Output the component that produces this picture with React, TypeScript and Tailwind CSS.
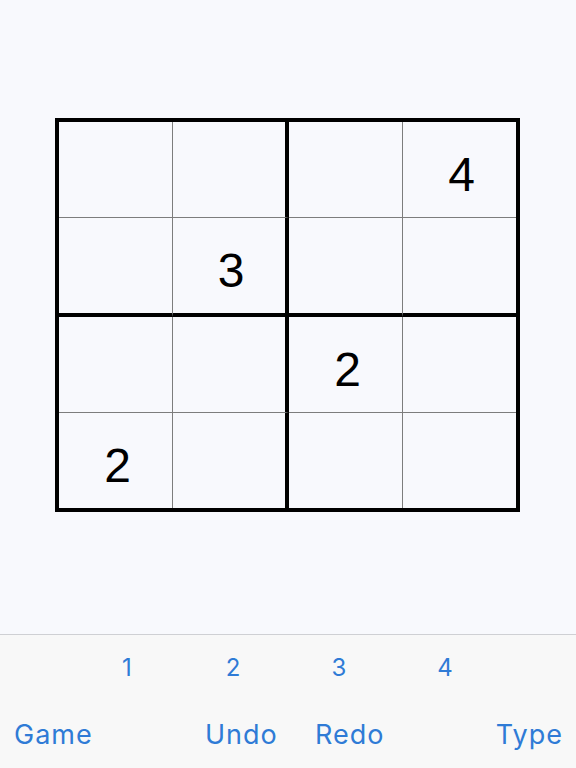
import React from "react";

const grid: (number | null)[][] = [
  [null, null, null, 4],
  [null, 3, null, null],
  [null, null, 2, null],
  [2, null, null, null],
];

const colW = ["w-[114px]", "w-[116px]", "w-[114px]", "w-[113px]"];
const colB = ["border-r border-r-[#7d7d7d]", "border-r-4 border-r-black", "border-r border-r-[#7d7d7d]", ""];
const rowH = ["h-[96px]", "h-[99px]", "h-[96px]", "h-[95px]"];
const rowB = ["border-b border-b-[#7d7d7d]", "border-b-4 border-b-black", "border-b border-b-[#7d7d7d]", ""];

export default function App() {
  return (
    <div
      className="w-[576px] h-[768px] bg-[#f8f9fd] flex flex-col overflow-hidden"
      style={{ fontFamily: '"Liberation Sans", Arial, sans-serif' }}
    >
      <div className="h-[634px] pt-[118px] pl-[55px]">
        <div className="w-[465px] h-[394px] border-4 border-black flex flex-col">
          {grid.map((row, r) => (
            <div key={r} className="flex">
              {row.map((v, c) => (
                <div
                  key={c}
                  className={`${colW[c]} ${rowH[r]} ${colB[c]} ${rowB[r]} flex items-center justify-center pt-[10px] pl-[4px] text-[48px] leading-none text-black`}
                >
                  {v ?? ""}
                </div>
              ))}
            </div>
          ))}
        </div>
      </div>
      <div
        className="flex-1 border-t border-t-[#cfd0d4] bg-[#f8f8f8] text-[#2f7bd6] flex flex-col"
        style={{ fontFamily: 'Inter, "Liberation Sans", sans-serif' }}
      >
        <div className="flex pl-[74px] pt-[21px] h-[68px] text-[24px] leading-none">
          <div className="w-[106px] text-center">1</div>
          <div className="w-[106px] text-center">2</div>
          <div className="w-[106px] text-center">3</div>
          <div className="w-[106px] text-center">4</div>
        </div>
        <div className="flex items-start pt-[18px] text-[27px] tracking-[1px] leading-none">
          <div className="w-[205px] pl-[14px]">Game</div>
          <div className="w-[110px]">Undo</div>
          <div className="w-[110px]">Redo</div>
          <div className="flex-1 text-right pr-[13px]">Type</div>
        </div>
      </div>
    </div>
  );
}
